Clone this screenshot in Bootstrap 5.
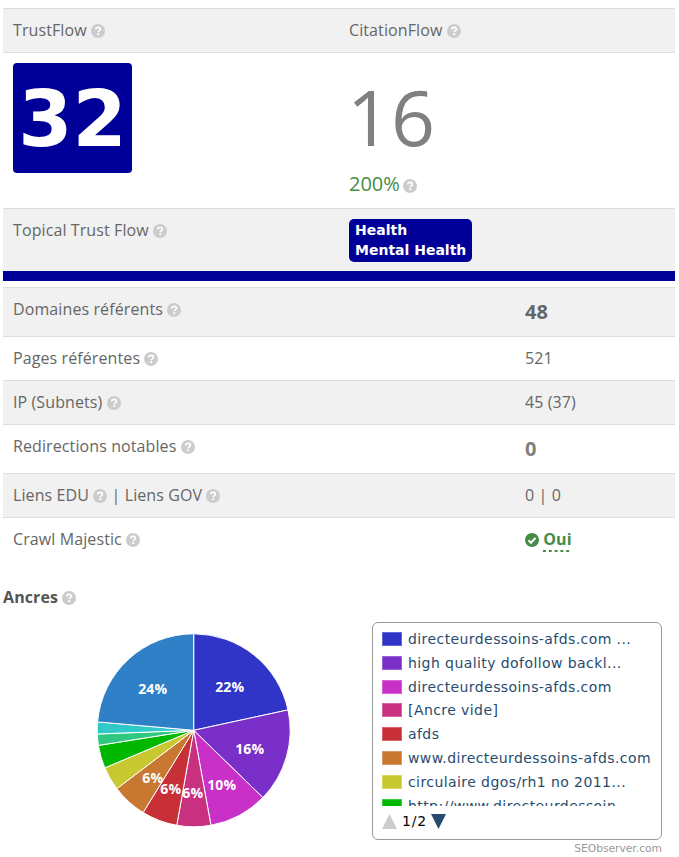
<!DOCTYPE html>
<html lang="fr">
  <head>
    <meta charset="UTF-8" />
    <meta name="viewport" content="width=device-width, initial-scale=1.0" />
    <title>Ancres et TrustFlow</title>
    <link
      href="https://cdn.jsdelivr.net/npm/bootstrap@5.3.0/dist/css/bootstrap.min.css"
      rel="stylesheet"
    />
    <style>
      html,
      body {
        height: 857px;
        overflow: hidden;
      }
      body {
        background: #fff;
        padding: 8px 4px 0 3px;
        font-family: "Open Sans", sans-serif;
        font-size: 16px;
        line-height: 23px;
        letter-spacing: 0.1px;
        color: #666;
      }
      .seo-table {
        margin: 0;
        color: #666;
        border-top: 1px solid #ddd;
      }
      .seo-table > tbody > tr > td {
        padding: 10px;
        border-bottom: 1px solid #ddd;
        box-shadow: none;
        background: #fff;
        color: #666;
      }
      .seo-table > tbody > tr.row-grey > td {
        background: #f1f1f1;
      }
      .seo-table > tbody > tr:last-child > td {
        border-bottom: 0;
      }
      .seo-table > tbody > tr > td.ttf-cell {
        padding-bottom: 9px;
      }
      .flow-head > td {
        width: 336px;
      }
      .help-ico {
        width: 14px;
        height: 14px;
        vertical-align: -2px;
      }
      .tf-box {
        width: 119px;
        height: 110px;
        background: #000099;
        border-radius: 4px;
        color: #fff;
        font-family: "DejaVu Sans", sans-serif;
        font-weight: 700;
        font-size: 78px;
        letter-spacing: 0;
        line-height: 112px;
        text-align: center;
      }
      .cf-num {
        font-size: 77px;
        font-weight: 400;
        line-height: 108px;
        color: #808080;
        letter-spacing: 0;
        margin-left: -2px;
      }
      .cf-delta {
        font-size: 20px;
        line-height: 25px;
        color: #458c45;
        letter-spacing: 0;
        margin-bottom: 2px;
      }
      .cf-delta .help-ico {
        margin-left: -2px;
      }
      .ttf-badge {
        display: block;
        width: fit-content;
        height: 43px;
        background: #000099;
        border-radius: 5px;
        color: #fff;
        font-family: "DejaVu Sans", sans-serif;
        font-weight: 700;
        font-size: 14px;
        letter-spacing: 0;
        line-height: 20px;
        padding: 1px 6px 2px 6px;
      }
      .flow-bar {
        height: 10px;
        background: #000099;
        margin-bottom: 6px;
      }
      .val-col {
        width: 160px;
      }
      .val-big {
        font-size: 20px;
        font-weight: 700;
        line-height: 28px;
        letter-spacing: 0;
      }
      .val-zero {
        color: #808080;
      }
      .oui-link {
        color: #458c45;
        font-weight: 700;
        padding-bottom: 2px;
        background: linear-gradient(90deg, #458c45 3px, transparent 3px) left bottom / 5.8px 2px repeat-x;
      }
      .ancres-title {
        margin: 25px 0 0;
        font-size: 16px;
        font-weight: 700;
        color: #555;
        line-height: 23px;
      }
      .chart-zone {
        margin-top: 11px;
      }
      .pie-svg {
        width: 369px;
        height: 232px;
        flex: none;
      }
      .pie-lbl {
        font-family: "Open Sans", sans-serif;
        font-weight: 700;
        font-size: 14px;
        fill: #fff;
        text-anchor: middle;
      }
      .legend-col {
        width: 290px;
      }
      .legend-box {
        height: 218px;
        margin-top: 2px;
        border: 1.5px solid #999;
        border-radius: 6px;
        padding: 8px 8px 0 9px;
      }
      .legend-clip {
        height: 175px;
        overflow: hidden;
      }
      .legend-row {
        height: 23.8px;
        font-family: "DejaVu Sans", sans-serif;
        font-size: 14px;
        letter-spacing: 0.42px;
        line-height: 16px;
        color: #274b6d;
        white-space: nowrap;
      }
      .legend-swatch {
        flex: none;
        width: 20px;
        height: 14px;
        margin: 1px 6px 0 0;
        box-shadow: inset 0 0 0 1px rgba(255, 255, 255, 0.25);
      }
      .legend-nav {
        font-family: "DejaVu Sans", sans-serif;
        font-size: 14px;
        letter-spacing: 0.8px;
        line-height: 16px;
        color: #000;
        margin-top: 7px;
      }
      .credit {
        font-family: "DejaVu Sans", sans-serif;
        font-size: 10.7px;
        letter-spacing: 0;
        line-height: 14px;
        color: #999;
        text-align: right;
        margin-top: 2px;
      }
    </style>
  </head>
  <body>
    <svg width="0" height="0" class="position-absolute">
      <symbol id="ico-help" viewBox="0 0 14 14">
        <circle cx="7" cy="7" r="7" fill="#ccc" />
        <path
          d="M4.7 5.4C4.8 4 5.8 3.3 7.1 3.3c1.3 0 2.3.8 2.3 1.9 0 1.7-2.2 1.6-2.2 3.1"
          fill="none"
          stroke="#fff"
          stroke-width="1.7"
        />
        <rect x="6.2" y="9.2" width="2" height="1.9" fill="#fff" />
      </symbol>
    </svg>

    <table class="table seo-table">
      <tbody>
        <tr class="row-grey flow-head">
          <td>TrustFlow <svg class="help-ico"><use href="#ico-help" /></svg></td>
          <td>CitationFlow <svg class="help-ico"><use href="#ico-help" /></svg></td>
        </tr>
        <tr>
          <td><div class="tf-box">32</div></td>
          <td>
            <div class="cf-num">16</div>
            <div class="cf-delta">200% <svg class="help-ico"><use href="#ico-help" /></svg></div>
          </td>
        </tr>
        <tr class="row-grey">
          <td class="ttf-cell">Topical Trust Flow <svg class="help-ico"><use href="#ico-help" /></svg></td>
          <td class="ttf-cell"><span class="ttf-badge">Health<br />Mental Health</span></td>
        </tr>
      </tbody>
    </table>
    <div class="flow-bar"></div>

    <table class="table seo-table">
      <tbody>
        <tr class="row-grey">
          <td>Domaines référents <svg class="help-ico"><use href="#ico-help" /></svg></td>
          <td class="val-col"><span class="val-big">48</span></td>
        </tr>
        <tr>
          <td>Pages référentes <svg class="help-ico"><use href="#ico-help" /></svg></td>
          <td class="val-col">521</td>
        </tr>
        <tr class="row-grey">
          <td>IP (Subnets) <svg class="help-ico"><use href="#ico-help" /></svg></td>
          <td class="val-col">45 (37)</td>
        </tr>
        <tr>
          <td>Redirections notables <svg class="help-ico"><use href="#ico-help" /></svg></td>
          <td class="val-col"><span class="val-big val-zero">0</span></td>
        </tr>
        <tr class="row-grey">
          <td>
            Liens EDU <svg class="help-ico"><use href="#ico-help" /></svg> | Liens GOV
            <svg class="help-ico"><use href="#ico-help" /></svg>
          </td>
          <td class="val-col">0 | 0</td>
        </tr>
        <tr>
          <td>Crawl Majestic <svg class="help-ico"><use href="#ico-help" /></svg></td>
          <td class="val-col">
            <svg class="help-ico" viewBox="0 0 14 14">
              <circle cx="7" cy="7" r="7" fill="#458c45" />
              <path d="M3.5 7.2l2.5 2.5 4.6-4.8" fill="none" stroke="#fff" stroke-width="2" />
            </svg>
            <span class="oui-link">Oui</span>
          </td>
        </tr>
      </tbody>
    </table>

    <div class="ancres-title">Ancres <svg class="help-ico"><use href="#ico-help" /></svg></div>

    <div class="chart-zone d-flex">
      <svg class="pie-svg" id="pie" viewBox="0 0 369 232"></svg>
      <div class="legend-col">
        <div class="legend-box">
          <div class="legend-clip" id="legend"></div>
          <div class="legend-nav d-flex align-items-center">
            <svg width="16" height="15" viewBox="0 0 16 15"><path d="M7.5 0l7.5 15H0z" fill="#ccc" /></svg>
            <span class="mx-1">1/2</span>
            <svg width="16" height="15" viewBox="0 0 16 15"><path d="M0 0h15L7.5 15z" fill="#274b6d" /></svg>
          </div>
        </div>
        <div class="credit">SEObserver.com</div>
      </div>
    </div>

    <script>
      // end angle of each slice, clockwise from the top, read off the picture
      const slices = [
        { end: 77.8, color: "#3035c8", name: "directeurdessoins-afds.com ...", label: "22%", lx: 36, ly: -38 },
        { end: 134.2, color: "#7a30c8", name: "high quality dofollow backl...", label: "16%", lx: 56, ly: 24 },
        { end: 169.7, color: "#c830c8", name: "directeurdessoins-afds.com", label: "10%", lx: 28, ly: 60 },
        { end: 190.1, color: "#c83080", name: "[Ancre vide]", label: "6%", lx: -1, ly: 68 },
        { end: 211.6, color: "#c83038", name: "afds", label: "6%", lx: -23, ly: 64 },
        { end: 232.8, color: "#c87830", name: "www.directeurdessoins-afds.com", label: "6%", lx: -41, ly: 53 },
        { end: 247.1, color: "#c8c830", name: "circulaire dgos/rh1 no 2011..." },
        { end: 261, color: "#00b800", name: "http://www.directeurdessoin..." },
        { end: 267.8, color: "#30c880" },
        { end: 275, color: "#30c8c8" },
        { end: 360, color: "#3080c8", label: "24%", lx: -41, ly: -36 },
      ];
      const cx = 190.7;
      const cy = 110.3;
      const r = 96.5;
      const point = (deg) => {
        const a = (deg * Math.PI) / 180;
        return (cx + r * Math.sin(a)).toFixed(2) + " " + (cy - r * Math.cos(a)).toFixed(2);
      };
      let start = 0;
      let paths = "";
      let labels = "";
      let rows = "";
      slices.forEach((s) => {
        const large = s.end - start > 180 ? 1 : 0;
        paths += `<path d="M${cx} ${cy}L${point(start)}A${r} ${r} 0 ${large} 1 ${point(s.end)}Z" fill="${s.color}" stroke="#fff" stroke-width="1" />`;
        if (s.label) {
          labels += `<text class="pie-lbl" x="${cx + s.lx}" y="${cy + s.ly}">${s.label}</text>`;
        }
        if (s.name) {
          rows += `<div class="legend-row d-flex"><span class="legend-swatch" style="background:${s.color}"></span><span>${s.name}</span></div>`;
        }
        start = s.end;
      });
      document.getElementById("pie").innerHTML = paths + labels;
      document.getElementById("legend").innerHTML = rows;
    </script>
    <script src="https://cdn.jsdelivr.net/npm/bootstrap@5.3.0/dist/js/bootstrap.bundle.min.js"></script>
  </body>
</html>
